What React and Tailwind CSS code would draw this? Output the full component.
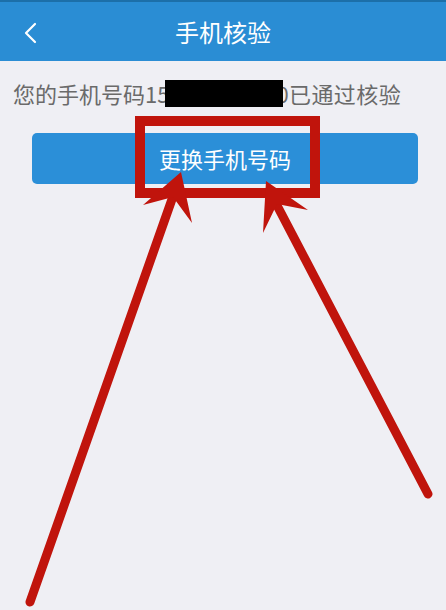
import React from 'react'

// red annotation drawn over the screenshot
function Marks() {
  return (
    <svg className="absolute left-0 top-0 pointer-events-none" width="446" height="610" viewBox="0 0 446 610">
      <rect x="140" y="121" width="175" height="72" fill="none" stroke="#c0140c" strokeWidth="10" />
      <line x1="177" y1="185" x2="30" y2="602" stroke="#c0140c" strokeWidth="9" strokeLinecap="round" />
      <polygon points="181,172 143,205 173,197 192,223" fill="#c0140c" />
      <line x1="270" y1="192" x2="428" y2="494" stroke="#c0140c" strokeWidth="9" strokeLinecap="round" />
      <polygon points="266,181 263,233 277,204 308,210" fill="#c0140c" />
    </svg>
  )
}

export default function App() {
  return (
    <div className="relative w-[446px] h-[610px] overflow-hidden bg-[#efeff4]" style={{ fontFamily: '"Noto Sans CJK SC", "Noto Sans", sans-serif' }}>
      <div className="h-[61px] bg-[#2a8dd4] border-t-2 border-[#1c6fa9] flex items-center relative">
        <svg className="absolute left-[22px] top-[20px]" width="16" height="22" viewBox="0 0 16 22">
          <path d="M13 2 L4 11 L13 20" fill="none" stroke="white" strokeWidth="2.2" strokeLinecap="round" strokeLinejoin="round" />
        </svg>
        <div className="w-full text-center text-white text-[24px] leading-none">手机核验</div>
      </div>

      <div className="pt-[16px] pl-[13px] text-[22px] leading-[32px] text-[#6a6a6a] whitespace-nowrap flex items-center">
        <span>您的手机号码15</span>
        <span className="relative z-10 inline-block w-[118px] h-[27px] bg-black -ml-[4px] -mr-[7px]"></span>
        <span className="tracking-[0.4px]">0已通过核验</span>
      </div>

      <div className="ml-[32px] mr-[28px] mt-[24px] h-[51px] rounded-[5px] bg-[#2b8fd8] flex items-center justify-center text-white text-[22px]">
        更换手机号码
      </div>

      <Marks />
    </div>
  )
}
